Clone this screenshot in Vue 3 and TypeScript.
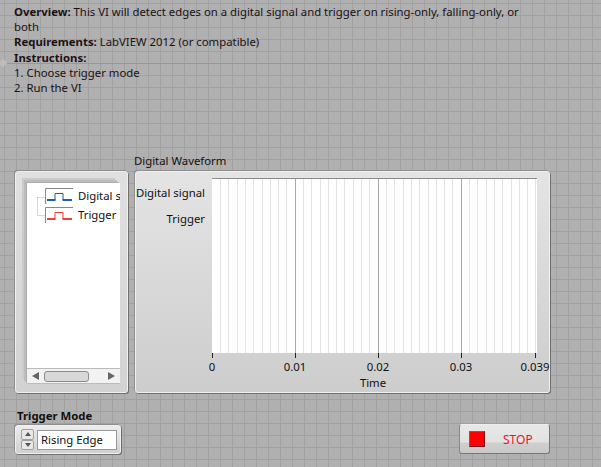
<template>
  <div class="panel">
    <div class="origin-line"></div>
    <div class="origin-mark"></div>
    <section class="notes">
      <p><b>Overview:</b> This VI will detect edges on a digital signal and trigger on rising-only, falling-only, or both</p>
      <p><b>Requirements:</b> LabVIEW 2012 (or compatible)</p>
      <p><b>Instructions:</b></p>
      <p>1. Choose trigger mode</p>
      <p>2. Run the VI</p>
    </section>

    <div class="graph-row">
      <div class="legend raised">
        <div class="legend-well">
          <div class="legend-list">
            <svg class="tree" width="12" height="34" viewBox="0 0 12 34">
              <path d="M0.5 4.5H9M0.5 4.5V22.5H9" fill="none" stroke="#b0b0b0" stroke-dasharray="1 1" />
            </svg>
            <div v-for="p in plots" :key="p.name" class="legend-item">
              <svg class="swatch" width="28" height="16" viewBox="0 0 28 16">
                <path d="M0.5 16V0.5H28" fill="none" stroke="#888" />
                <path d="M10 12V5.5H18V12" fill="none" :stroke="p.color" />
                <path d="M2 12H10.5M17.5 12H27" fill="none" :stroke="p.color" stroke-width="2" />
              </svg>
              <span>{{ p.name }}</span>
            </div>
          </div>
          <div class="hscroll">
            <span class="arrow left"></span>
            <span class="thumb"></span>
            <span class="arrow right"></span>
          </div>
        </div>
      </div>

      <div class="chart-wrap">
        <div class="chart-title">Digital Waveform</div>
        <div class="chart raised">
          <div class="y-labels">
            <span>Digital signal</span>
            <span>Trigger</span>
          </div>
          <div class="plot-col">
            <div class="plot">
              <i v-for="x in minor" :key="x" class="minor" :style="{ left: x + 'px' }"></i>
              <i v-for="x in major" :key="x" class="major" :style="{ left: x + 'px' }"></i>
            </div>
            <div class="ticks">
              <div v-for="t in ticks" :key="t.label" class="tick" :style="{ left: t.x + 'px' }">
                <i></i><span>{{ t.label }}</span>
              </div>
            </div>
            <div class="x-title">Time</div>
          </div>
        </div>
      </div>
    </div>

    <div class="bottom-row">
      <div class="mode">
        <div class="mode-label">Trigger Mode</div>
        <div class="ring raised">
          <div class="spin">
            <span class="up"></span>
            <span class="down"></span>
          </div>
          <div class="ring-value">Rising Edge</div>
        </div>
      </div>
      <button class="stop">
        <span class="led"></span>
        <span class="stop-text">STOP</span>
      </button>
    </div>
  </div>
</template>

<script setup lang="ts">
const plots = [
  { name: 'Digital s', color: '#1a62a8' },
  { name: 'Trigger', color: '#f23c3c' }
]
const major: number[] = [83, 166, 249]
const minor: number[] = []
for (let i = 8; i < 325; i += 8.3) {
  minor.push(Math.round(i))
}
const ticks = [
  { label: '0', x: 0 },
  { label: '0.01', x: 83 },
  { label: '0.02', x: 166 },
  { label: '0.03', x: 249 },
  { label: '0.039', x: 323 }
]
</script>

<style>
html, body { margin: 0; background: #b0b0b0; overflow: hidden; }
</style>

<style scoped>
.panel {
  position: relative;
  width: 601px;
  height: 467px;
  box-sizing: border-box;
  padding: 4px 0 0 0;
  overflow: hidden;
  font-family: "Noto Sans", sans-serif;
  font-size: 11.35px;
  color: #111;
  background-color: #b0b0b0;
  background-image:
    linear-gradient(to right, #a1a1a1 1px, transparent 1px),
    linear-gradient(to bottom, #a1a1a1 1px, transparent 1px);
  background-size: 12px 12px;
  background-position: 4px 3px;
}
.origin-line {
  position: absolute;
  left: 0;
  right: 0;
  top: 63px;
  height: 1px;
  background: #979797;
}
.origin-mark {
  position: absolute;
  left: 0;
  top: 60px;
  width: 6px;
  height: 6px;
  background: #bdbdbd;
  transform: rotate(45deg);
}
.notes {
  position: relative;
  margin-left: 14px;
  width: 508px;
  height: 91px;
  line-height: 15.2px;
  color: #201015;
}
.notes p { margin: 0; }
.graph-row {
  display: flex;
  margin: 58px 0 0 15px;
  gap: 7px;
  align-items: flex-end;
}
.raised {
  box-sizing: border-box;
  border-radius: 3px;
  background: linear-gradient(#e4e4e4, #cdcdcd);
  border: 1px solid #f0f0f0;
  box-shadow: 1px 1px 0 #6f6f6f, -1px -1px 0 #8e8e8e;
}
.legend {
  width: 113px;
  height: 222px;
  padding: 11px 8px 8px 11px;
  background: linear-gradient(#e0e0e0, #d2d2d2);
}
.legend-well {
  width: 93px;
  height: 201px;
  display: flex;
  flex-direction: column;
  background: #fff;
  box-shadow:
    -1px -1px 0 #adadad,
    -3px -3px 0 #bcbcbc,
    -5px -5px 0 #cbcbcb;
}
.legend-list {
  position: relative;
  flex: 1;
  padding: 5px 0 0 18px;
}
.tree {
  position: absolute;
  left: 10px;
  top: 10px;
}
.legend-item {
  position: relative;
  display: flex;
  align-items: flex-start;
  gap: 5px;
  height: 19px;
  white-space: nowrap;
  overflow: hidden;
}
.swatch { flex: none; }
.legend-item span { line-height: 15px; }
.hscroll {
  box-sizing: border-box;
  height: 16px;
  display: flex;
  align-items: center;
  padding: 0 5px;
  background: #f2f2f2;
  border-top: 1px solid #bbb;
  border-bottom: 1px solid #bbb;
}
.arrow {
  width: 0;
  height: 0;
  border-top: 4px solid transparent;
  border-bottom: 4px solid transparent;
}
.arrow.left { border-right: 7px solid #666; }
.arrow.right { border-left: 7px solid #666; }
.thumb {
  box-sizing: border-box;
  width: 45px;
  height: 11px;
  margin: 0 19px 0 5px;
  border: 1px solid #8c8c8c;
  border-radius: 3px;
  background: #d8d8d8;
}
.chart-wrap {
  position: relative;
  display: flex;
  flex-direction: column;
}
.chart-title {
  height: 18px;
  line-height: 16px;
  margin-left: -1px;
}
.chart {
  width: 415px;
  height: 222px;
  display: flex;
  padding: 6px 0 0 0;
}
.y-labels {
  width: 69px;
  flex: none;
  display: flex;
  flex-direction: column;
  align-items: flex-end;
  gap: 11px;
  padding-top: 7px;
  line-height: 15px;
  white-space: nowrap;
}
.plot-col {
  margin-left: 7px;
  width: 325px;
}
.plot {
  position: relative;
  height: 175px;
  box-sizing: border-box;
  background: #fff;
  border-top: 1px solid #8c8c8c;
  overflow: hidden;
}
.minor, .major {
  position: absolute;
  top: 0;
  bottom: 0;
  width: 1px;
}
.minor { background: #e4e4e4; }
.major { background: #a8a8a8; }
.ticks {
  position: relative;
  height: 19px;
}
.tick {
  position: absolute;
  top: 0;
  width: 0;
  display: flex;
  flex-direction: column;
  align-items: center;
}
.tick i {
  width: 1px;
  height: 5px;
  background: #222;
  flex: none;
}
.tick span {
  line-height: 15px;
  margin-top: 1px;
  white-space: nowrap;
}
.x-title {
  text-align: center;
  line-height: 14px;
  margin-top: 4px;
  margin-left: -3px;
}
.bottom-row {
  display: flex;
  justify-content: space-between;
  align-items: flex-end;
  margin: 15px 51px 0 15px;
}
.mode-label {
  font-weight: bold;
  line-height: 16px;
  margin: 0 0 1px 2px;
}
.ring {
  width: 106px;
  height: 29px;
  display: flex;
  align-items: center;
  gap: 3px;
  padding-left: 5px;
  background: linear-gradient(#ececec, #d0d0d0);
}
.spin {
  width: 13px;
  height: 21px;
  display: flex;
  flex-direction: column;
}
.spin span {
  flex: 1;
  display: flex;
  align-items: center;
  justify-content: center;
  background: #e8e8e8;
  border: 1px solid #a0a0a0;
  border-radius: 2px;
}
.spin .up::after, .spin .down::after {
  content: "";
  border-left: 3px solid transparent;
  border-right: 3px solid transparent;
}
.spin .up::after { border-bottom: 4px solid #555; }
.spin .down::after { border-top: 4px solid #555; }
.ring-value {
  box-sizing: border-box;
  width: 80px;
  height: 20px;
  line-height: 18px;
  padding-left: 3px;
  background: #fff;
  border: 1px solid #999;
}
.stop {
  box-sizing: border-box;
  width: 91px;
  height: 30px;
  display: flex;
  align-items: center;
  padding: 0 0 0 9px;
  border-radius: 3px;
  border: 1px solid #777;
  border-top-color: #eee;
  border-left-color: #888;
  background: linear-gradient(#e8e8e8 0, #e2e2e2 60%, #cfcfcf 65%, #c8c8c8 100%);
  font: inherit;
}
.led {
  box-sizing: border-box;
  width: 16px;
  height: 16px;
  background: #ff0000;
  border: 1px solid #c2395c;
  border-right-color: #7a1020;
  border-bottom-color: #7a1020;
}
.stop-text {
  margin-left: 18px;
  color: #f0102a;
  font-size: 12px;
}
</style>
